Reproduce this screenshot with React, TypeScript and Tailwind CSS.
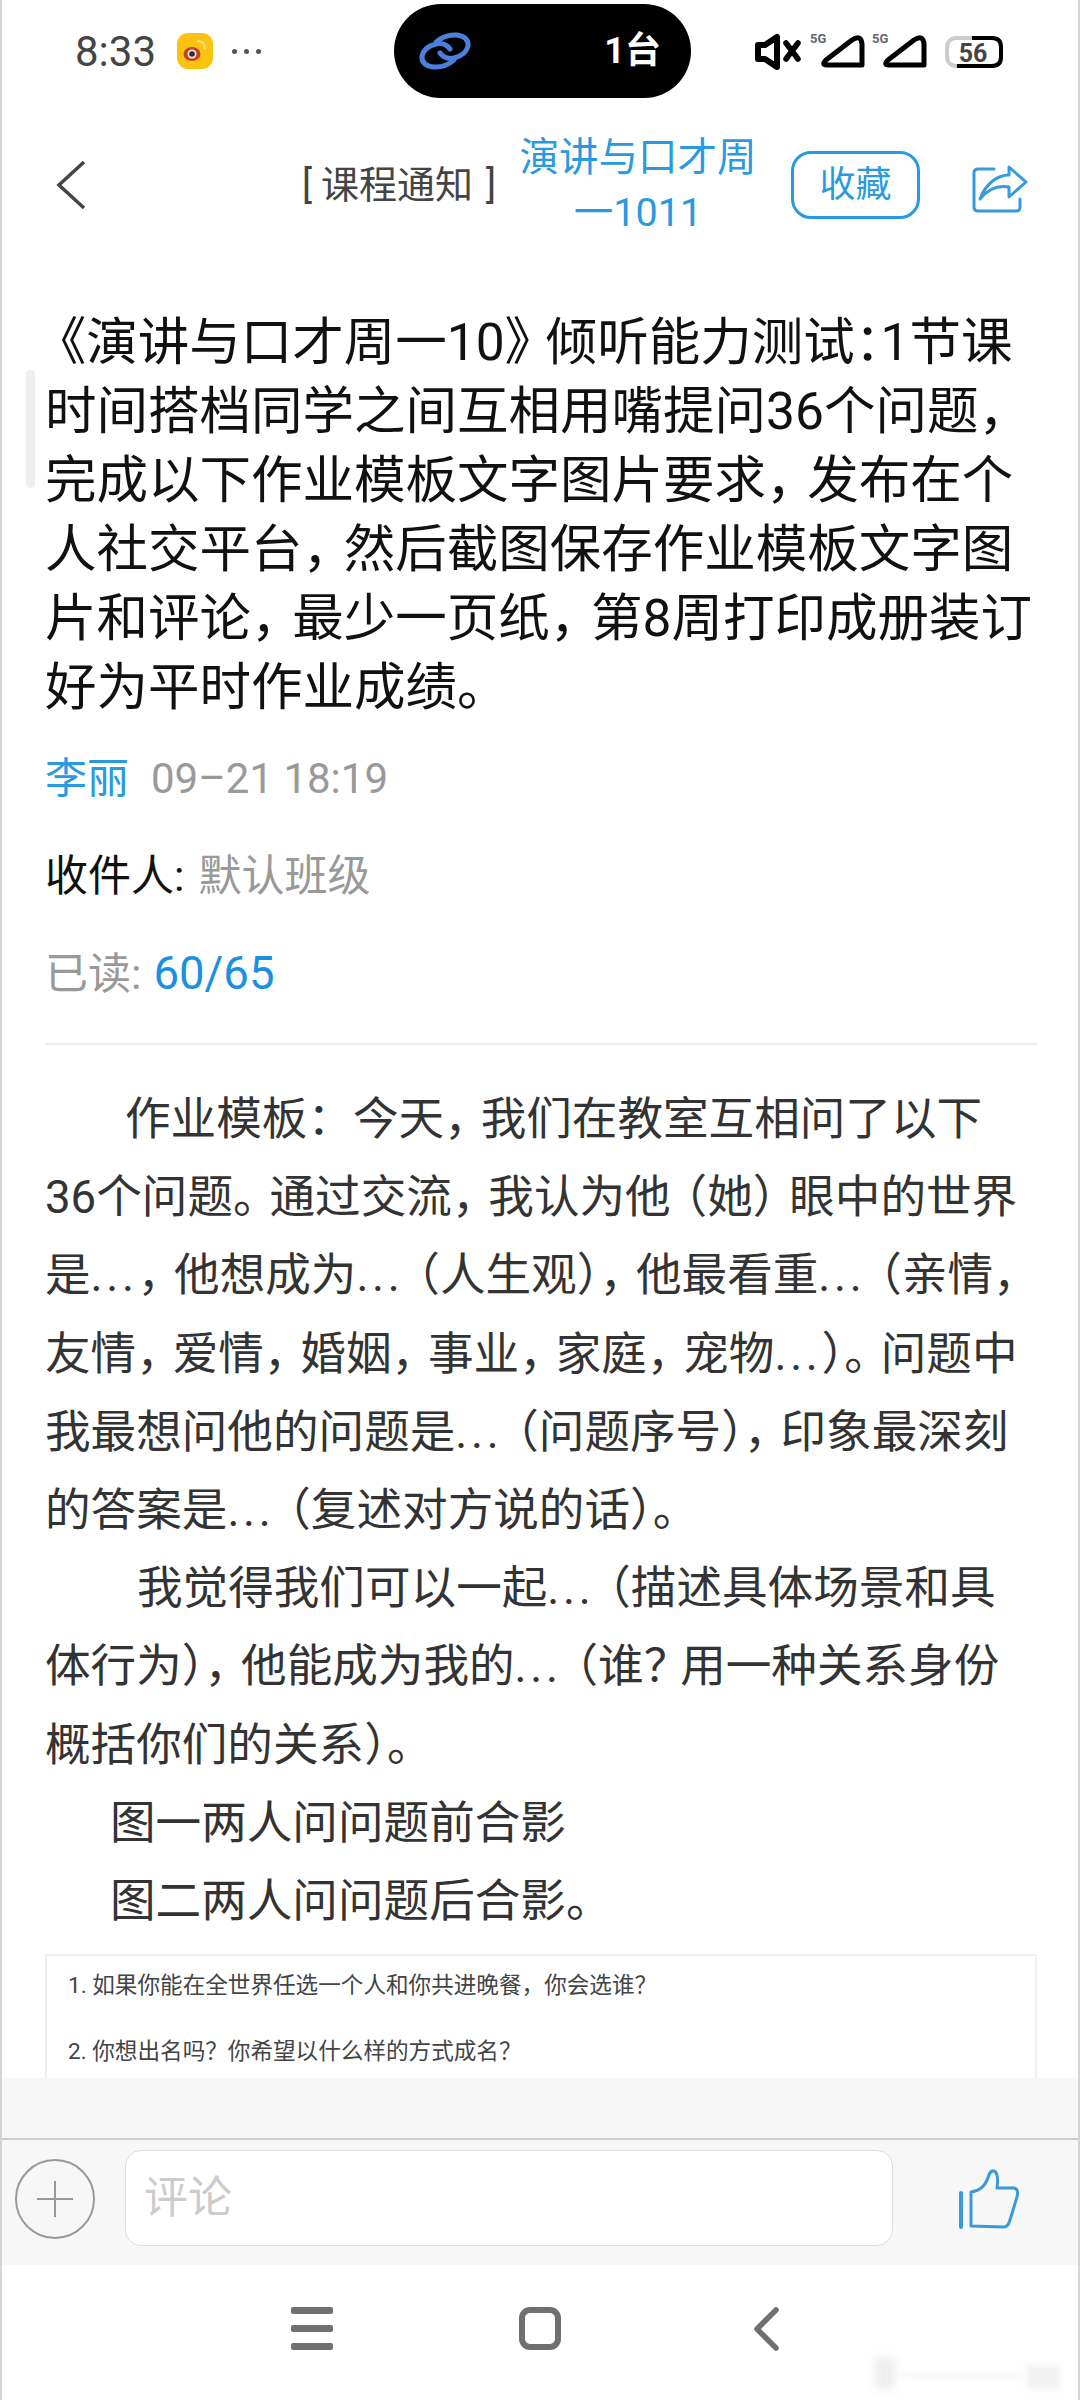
const titleLines = [
  '《演讲与口才周一10》倾听能力测试：1节课',
  '时间搭档同学之间互相用嘴提问36个问题，',
  '完成以下作业模板文字图片要求，发布在个',
  '人社交平台，然后截图保存作业模板文字图',
  '片和评论，最少一页纸，第8周打印成册装订',
  '好为平时作业成绩。',
];

// the reference font sets punctuation tighter than a full em, and its ellipsis sits on the baseline
function Tight({ text, colon }: { text: string; colon?: boolean }) {
  return (
    <>
      {text.split(/(…|：|），|）。|[，。）》？]|[（《])/).map((part, i) => {
        if (part === '…') return <span key={i} className="tracking-[0.08em]">...</span>;
        if (part === '：' && colon) return <span key={i} className="[font-feature-settings:'halt']">{part}</span>;
        if (/^(），|）。|[，。）》？])$/.test(part)) return <span key={i} className="pr-[0.3em] [font-feature-settings:'halt']">{part}</span>;
        if (/^[（《]$/.test(part)) return <span key={i} className="pl-[0.3em] [font-feature-settings:'halt']">{part}</span>;
        return <span key={i}>{part}</span>;
      })}
    </>
  );
}

function StatusBar() {
  return (
    <div className="flex h-[102px] shrink-0 items-center">
      <span className="ml-[73px] w-[100px] text-[42px] text-[#444]">8:33</span>
      <div className="ml-[2px] h-[36px] w-[36px] rounded-[11px] bg-[#fbc30f]">
        <svg width="36" height="36" viewBox="0 0 36 36">
          <ellipse cx="15" cy="21" rx="8.5" ry="7" fill="#c9402a" />
          <circle cx="15" cy="21" r="4.5" fill="#f3e8e8" />
          <circle cx="15" cy="21" r="2.8" fill="#3a2a2a" />
          <path d="M20 8 Q28 8 28 16" fill="none" stroke="#f8e08a" strokeWidth="2" />
        </svg>
      </div>
      <div className="ml-[19px] flex w-[162px] gap-[7px]">
        <span className="h-[5px] w-[5px] rounded-full bg-[#555]" />
        <span className="h-[5px] w-[5px] rounded-full bg-[#555]" />
        <span className="h-[5px] w-[5px] rounded-full bg-[#555]" />
      </div>
      <div className="flex h-[94px] w-[297px] items-center justify-between rounded-[47px] bg-black pl-[22px] pr-[30px]">
        <svg width="58" height="44" viewBox="0 0 58 44" fill="none" stroke="#4b7fdc" strokeWidth="5" strokeLinecap="round">
          <path d="M20 13 Q29 5 41 6 Q53 8 52 17 Q50 26 38 29 Q29 31 24 24" />
          <path d="M38 31 Q29 39 17 38 Q5 36 6 27 Q8 18 20 15 Q29 13 34 20" />
        </svg>
        <span className="text-[36px] font-bold text-white">1台</span>
      </div>
      <svg width="280" height="90" viewBox="0 0 280 90" className="ml-[48px] mt-[8px]">
        <path d="M19 35 H26 L38 27 V57 L26 49 H19 Z" fill="none" stroke="#000" strokeWidth="6" strokeLinejoin="round" />
        <path d="M47 33 L59 49 M59 33 L47 49" stroke="#000" strokeWidth="5.5" strokeLinecap="round" />
        <text x="71" y="33" fontSize="13" fontWeight="700" fill="#666">5G</text>
        <path d="M88 55 Q82 55 87 50 L113 30 Q122 24 123 34 V55 Z" fill="none" stroke="#000" strokeWidth="5" strokeLinejoin="round" />
        <text x="133" y="33" fontSize="13" fontWeight="700" fill="#666">5G</text>
        <path d="M150 55 Q144 55 149 50 L175 30 Q184 24 185 34 V55 Z" fill="none" stroke="#000" strokeWidth="5" strokeLinejoin="round" />
        <rect x="208" y="28" width="54" height="28" rx="9" fill="none" stroke="#ccc" strokeWidth="4" />
        <path d="M233 28 H253 Q262 28 262 37 V47 Q262 56 253 56 H218" fill="none" stroke="#000" strokeWidth="4" />
        <text x="234" y="52" fontSize="25" fontWeight="700" fill="#444" textAnchor="middle">56</text>
      </svg>
    </div>
  );
}

function NavBar() {
  return (
    <div className="flex h-[138px] shrink-0 items-center pt-[28px]">
      <svg width="32" height="50" viewBox="0 0 32 50" className="ml-[53px]" fill="none" stroke="#444" strokeWidth="3.5">
        <path d="M29 2 L4 25 L29 48" />
      </svg>
      <span className="ml-[215px] w-[200px] text-[38px] leading-none text-[#444]">
        [<span className="ml-[9px] mr-[13px]">课程通知</span>]
      </span>
      <div className="ml-[16px] w-[240px] text-center text-[39.5px] leading-[55px] text-[#2a9ae0]">
        <div>演讲与口才周</div>
        <div>一1011</div>
      </div>
      <div className="ml-[33px] flex h-[68px] w-[129px] items-center justify-center rounded-[20px] border-[3px] border-[#2a9ae0] text-[36px] text-[#2a9ae0]">
        收藏
      </div>
      <svg width="90" height="80" viewBox="0 0 90 80" className="ml-[28px]" fill="none" stroke="#3a9ad9" strokeWidth="3" strokeLinejoin="round">
        <path d="M46 24 H30 Q26 24 26 28 V62 Q26 66 30 66 H68 Q72 66 72 62 V54" strokeLinecap="round" />
        <path d="M32 54 C38 38 50 30 61 30 V22 L78 37 L61 52 V42 C50 40 40 44 32 54 Z" />
      </svg>
    </div>
  );
}

function Article() {
  return (
    <div className="min-h-0 flex-1 overflow-hidden pl-[43px] pr-[41px] pt-[68px]">
      <div className="whitespace-nowrap text-[51.5px] leading-[69px] text-[#111]">
        {titleLines.map(line => (
          <div key={line}><Tight text={line} colon /></div>
        ))}
      </div>
      <div className="mt-[26px] flex h-[60px] items-center gap-[22px] text-[42px]">
        <span className="text-[#2a9ae0]">李丽</span>
        <span className="text-[#999]">09–21 18:19</span>
      </div>
      <div className="mt-[38px] flex h-[60px] items-center text-[43px] text-[#999]">
        <span className="text-[#111]">收件人:</span>
        <span className="ml-[14px]">默认班级</span>
      </div>
      <div className="mt-[38px] flex h-[60px] items-center text-[43px] text-[#999]">
        <span>已读:</span>
        <span className="ml-[12px] text-[45.5px] text-[#1c90e0]">60/65</span>
      </div>
      <div className="mt-[39px] h-[2px] bg-[#eee]" />
      <div className="mt-[36px] whitespace-nowrap text-[45.6px] leading-[78.2px] text-[#333]">
        <div className="pl-[80px]"><Tight text="作业模板：今天，我们在教室互相问了以下" /></div>
        <div><Tight text="36个问题。通过交流，我认为他（她）眼中的世界" /></div>
        <div><Tight text="是…，他想成为…（人生观），他最看重…（亲情，" /></div>
        <div><Tight text="友情，爱情，婚姻，事业，家庭，宠物…）。问题中" /></div>
        <div><Tight text="我最想问他的问题是…（问题序号），印象最深刻" /></div>
        <div><Tight text="的答案是…（复述对方说的话）。" /></div>
        <div className="pl-[92px]"><Tight text="我觉得我们可以一起…（描述具体场景和具" /></div>
        <div><Tight text="体行为），他能成为我的…（谁？用一种关系身份" /></div>
        <div><Tight text="概括你们的关系）。" /></div>
        <div className="pl-[65px]"><Tight text="图一两人问问题前合影" /></div>
        <div className="pl-[65px]"><Tight text="图二两人问问题后合影。" /></div>
      </div>
      <div className="mt-[13px] h-[140px] border-2 border-[#f0f0f0] pl-[21px] pt-[14px] text-[22.6px] leading-[32px] text-[#444]">
        <div>1. 如果你能在全世界任选一个人和你共进晚餐，你会选谁？</div>
        <div className="mt-[34px]">2. 你想出名吗？你希望以什么样的方式成名？</div>
      </div>
    </div>
  );
}

function CommentBar() {
  return (
    <div className="h-[187px] shrink-0 bg-[#f7f7f7] pt-[60px]">
      <div className="flex h-[127px] items-start border-t-2 border-[#ccc] pt-[10px]">
        <div className="ml-[13px] mt-[9px] flex h-[80px] w-[80px] items-center justify-center rounded-full border-2 border-[#999]">
          <svg width="38" height="38" viewBox="0 0 38 38" stroke="#999" strokeWidth="2">
            <path d="M19 1 V37 M1 19 H37" />
          </svg>
        </div>
        <div className="ml-[30px] flex h-[96px] w-[768px] items-center rounded-[16px] border border-[#ddd] bg-white pl-[18px] text-[44px] text-[#ccc]">
          评论
        </div>
        <svg width="110" height="90" viewBox="0 0 110 90" className="ml-[37px]" fill="none" stroke="#3a9ad9" strokeWidth="3" strokeLinejoin="round">
          <path d="M31 43 V77" strokeWidth="4" strokeLinecap="round" />
          <path d="M41 76 V42 Q53 41 58 28 Q60 20 64 21 Q69 23 67 38 H84 Q89 39 87 47 L80 70 Q78 77 74 77 Z" />
        </svg>
      </div>
    </div>
  );
}

function SystemNav() {
  return (
    <div className="relative flex h-[135px] shrink-0 items-start bg-white pt-[42px]">
      <div className="ml-[289px] flex h-[43px] w-[42px] flex-col justify-between">
        <span className="h-[7px] rounded-[2px] bg-[#707070]" />
        <span className="h-[7px] rounded-[2px] bg-[#707070]" />
        <span className="h-[7px] rounded-[2px] bg-[#707070]" />
      </div>
      <div className="ml-[186px] h-[43px] w-[42px] rounded-[11px] border-[6px] border-[#707070]" />
      <svg width="28" height="44" viewBox="0 0 28 44" className="ml-[191px]" fill="none" stroke="#707070" strokeWidth="5.5" strokeLinecap="round" strokeLinejoin="round">
        <path d="M24 3 L5 22 L24 41" />
      </svg>
      {/* faint watermark smudge, bottom right */}
      <div className="absolute left-[873px] top-[92px] h-[32px] w-[20px] bg-[#eeeeee] blur-[4px]" />
      <div className="absolute left-[900px] top-[108px] h-[4px] w-[120px] bg-[#f6f6f6] blur-[2px]" />
      <div className="absolute left-[1024px] top-[100px] h-[24px] w-[34px] bg-[#f2f2f2] blur-[3px]" />
    </div>
  );
}

export default function App() {
  return (
    <div className="relative box-border flex h-[2400px] w-[1080px] flex-col overflow-hidden border-x-2 border-[#d4d4d4] bg-white font-[Roboto,'Noto_Sans_CJK_SC',sans-serif]">
      <StatusBar />
      <NavBar />
      <Article />
      <CommentBar />
      <SystemNav />
      <div className="absolute left-[24px] top-[370px] h-[118px] w-[9px] rounded-[4px] bg-[#eeeeee]" />
    </div>
  );
}
